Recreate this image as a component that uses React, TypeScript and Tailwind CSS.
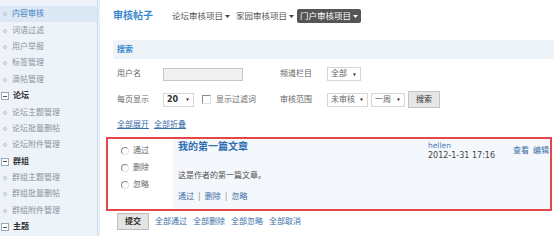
import type { ReactNode } from "react";

type SideItem = { label: string; active?: boolean; group?: boolean };

const sideItems: SideItem[] = [
  { label: "内容审核", active: true },
  { label: "词语过滤" },
  { label: "用户举报" },
  { label: "标签管理" },
  { label: "滴帖管理" },
  { label: "论坛", group: true },
  { label: "论坛主题管理" },
  { label: "论坛批量删帖" },
  { label: "论坛附件管理" },
  { label: "群组", group: true },
  { label: "群组主题管理" },
  { label: "群组批量删帖" },
  { label: "群组附件管理" },
  { label: "主题", group: true },
];

const tabs = [
  { label: "论坛审核项目", active: false },
  { label: "家园审核项目", active: false },
  { label: "门户审核项目", active: true },
];

function Caret({ className = "fill-[#333]" }: { className?: string }) {
  return (
    <svg width="5" height="3" viewBox="0 0 5 3" className={className}>
      <path d="M0 0h5L2.5 3z" />
    </svg>
  );
}

function FakeSelect({ children, width }: { children: ReactNode; width: string }) {
  return (
    <div
      className={`flex h-[14px] items-center justify-between border border-[#d6d6d6] bg-white pl-[3px] pr-[4px] ${width}`}
    >
      <span>{children}</span>
      <svg width="3" height="3" viewBox="0 0 3 3" className="fill-[#222]">
        <path d="M0 0.5h3L1.5 3z" />
      </svg>
    </div>
  );
}

function Radio({ label }: { label: string }) {
  return (
    <div className="flex h-[17px] items-center gap-[4px]">
      <span className="h-[8px] w-[8px] shrink-0 rounded-full border border-[#8a8a8a] border-b-[#e4e4e4] border-r-[#e4e4e4] bg-white" />
      <span>{label}</span>
    </div>
  );
}

export default function App() {
  return (
    <div className="flex h-[236px] w-[554px] overflow-hidden bg-white font-['DejaVu_Sans','Noto_Sans_CJK_SC',sans-serif] text-[8px] leading-none text-[#666]">
      <aside className="w-[98px] shrink-0 border-r border-[#cddbea] bg-[#eef3f9] pt-[6px]">
        {sideItems.map((item) =>
          item.group ? (
            <div key={item.label} className="flex h-[16.4px] items-center gap-[4px] pl-[1px] font-bold text-[#333]">
              <span className="flex h-[8px] w-[8px] items-center justify-center border border-[#9aa8b8] bg-white">
                <span className="h-px w-[4px] bg-[#555]" />
              </span>
              <span>{item.label}</span>
            </div>
          ) : (
            <div
              key={item.label}
              className={`flex h-[16.4px] items-center gap-[5px] pl-[3px] ${
                item.active ? "bg-[#dde8f5] text-[#3a7cc2]" : "text-[#8a929c]"
              }`}
            >
              <span className="h-[4px] w-[4px] rounded-full border border-[#b8c4d0]" />
              <span>{item.label}</span>
            </div>
          )
        )}
      </aside>

      <main className="min-w-0 flex-1 border-l-2 border-[#e7eff8]">
        <header className="flex h-[40px] items-start pl-[13px] pt-[9px]">
          <h1 className="flex h-[14px] w-[56px] items-center text-[10px] font-bold text-[#3a88cc]">审核帖子</h1>
          <nav className="flex items-center">
            {tabs.map((tab) => (
              <span
                key={tab.label}
                className={`flex h-[14px] items-center gap-[2px] rounded-[2px] px-[3px] text-[8.5px] ${
                  tab.active ? "bg-[#555] text-white" : "text-[#555]"
                }`}
              >
                {tab.label}
                <Caret className={tab.active ? "fill-white" : "fill-[#444]"} />
              </span>
            ))}
          </nav>
        </header>

        <div className="ml-[13px] flex h-[19px] items-center bg-[#eef3f8] pl-[4px] font-bold text-[#3a88cc]">搜索</div>

        <section className="pl-[17px] pt-[7px]">
          <div className="grid h-[16px] grid-cols-[46px_117px_47px_1fr] items-center">
            <span>用户名</span>
            <div className="h-[13px] w-[80px] border border-[#c6c6c6] bg-[#f1f1f1]" />
            <span>频道栏目</span>
            <FakeSelect width="w-[34px]">全部</FakeSelect>
          </div>
          <div className="mt-[9px] grid h-[17px] grid-cols-[46px_117px_47px_1fr] items-center">
            <span>每页显示</span>
            <div className="flex items-center">
              <FakeSelect width="w-[31px]">
                <span className="font-bold text-[#333]">20</span>
              </FakeSelect>
              <span className="ml-[8px] h-[9px] w-[9px] border border-[#8a8a8a] border-b-[#e0e0e0] border-r-[#e0e0e0] bg-white" />
              <span className="ml-[5px]">显示过滤词</span>
            </div>
            <span>审核范围</span>
            <div className="flex items-center gap-[3px]">
              <FakeSelect width="w-[41px]">未审核</FakeSelect>
              <FakeSelect width="w-[34px]">一周</FakeSelect>
              <button className="flex h-[17px] w-[32px] items-center justify-center border border-[#c4c4c4] bg-[#e6e6e6] text-[#333]">
                搜索
              </button>
            </div>
          </div>
          <div className="mt-[11px] flex h-[12px] items-center gap-[5px] text-[#3a6ea8]">
            <span className="underline">全部展开</span>
            <span className="underline">全部折叠</span>
          </div>
        </section>

        <article className="ml-[6px] mr-[2px] mt-[6px] flex h-[74px] border-2 border-[#e24848]">
          <div className="w-[65px] shrink-0 bg-white pl-[13px] pt-[3px]">
            <Radio label="通过" />
            <Radio label="删除" />
            <Radio label="忽略" />
          </div>
          <div className="flex min-w-0 flex-1 flex-col bg-[#f4f7fb] pl-[5px]">
            <div className="flex h-[24px] items-start pt-[2px]">
              <h2 className="flex-1 pt-[1px] text-[10px] font-bold text-[#2f6eb3]">我的第一篇文章</h2>
              <div className="w-[85px] shrink-0 leading-[10px]">
                <div className="text-[7.5px] text-[#4a7bb5]">hellen</div>
                <div className="text-[8px] text-[#444]">2012-1-31 17:16</div>
              </div>
              <div className="flex w-[37px] shrink-0 gap-[4px] pt-[6px] text-[#3a6ea8]">
                <span>查看</span>
                <span>编辑</span>
              </div>
            </div>
            <p className="mt-[9px] text-[#555]">这是作者的第一篇文章。</p>
            <div className="mt-[13px] flex items-center gap-[4px] text-[#3a6ea8]">
              <span>通过</span>
              <span className="text-[#999]">|</span>
              <span>删除</span>
              <span className="text-[#999]">|</span>
              <span>忽略</span>
            </div>
          </div>
        </article>

        <footer className="mt-[2px] flex h-[17px] items-center pl-[17px]">
          <button className="flex h-[17px] w-[32px] items-center justify-center border border-[#bdbdbd] bg-[#e4e4e4] font-bold text-[#333]">
            提交
          </button>
          <div className="ml-[6px] flex gap-[6px] text-[#3a6ea8]">
            <span>全部通过</span>
            <span>全部删除</span>
            <span>全部忽略</span>
            <span>全部取消</span>
          </div>
        </footer>
      </main>
    </div>
  );
}
